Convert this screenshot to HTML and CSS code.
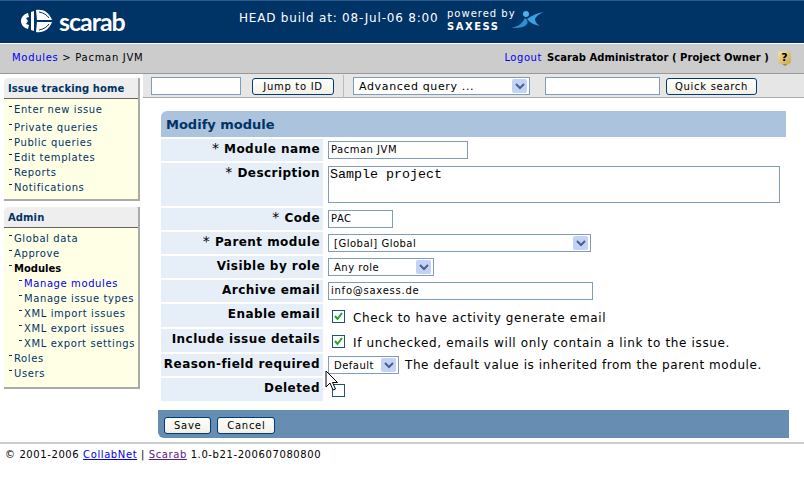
FILE: index.html
```html
<!DOCTYPE html>
<html lang="en">
<head>
    <meta charset="UTF-8">
    <title>Scarab - Modify module</title>
    <link rel="stylesheet" href="styles.css">
</head>
<body>
    <div class="header">
        <div class="logo">
            <svg class="beetle" width="32" height="24" viewBox="0 0 32 24">
                <g fill="#fff">
                    <path d="M7 4 C3 5 0 8 0 12 C0 16 3 19 7 20 L8 16 L5 15 L7 12 L5 9 L8 8 Z"/>
                    <path d="M10 3 L13 2 L13 22 L10 21 Z"/>
                    <path d="M15 1 C22 0 28 3 31 11 L16 11 Z"/>
                    <path d="M16 13 L31 13 C28 21 22 24 15 23 Z"/>
                </g>
                <path d="M18 3 C23 4 26 6 28 9 M18 21 C23 20 26 18 28 15" fill="none" stroke="#003366" stroke-width="1"/>
            </svg>
            <span class="logo-text">scarab</span>
        </div>
        <div class="build">HEAD build at: 08-Jul-06 8:00</div>
        <div class="powered">
            <div>powered by</div>
            <div class="saxess">SAXESS</div>
        </div>
        <svg class="saxess-logo" width="34" height="18" viewBox="0 0 34 18">
            <path d="M0 17 C6 16 11 13 14 7 C18 10 17 13 14 15 C10 17 5 17 0 17 Z" fill="#2f8fd0"/>
            <circle cx="15" cy="3" r="3" fill="#4fb0ea"/>
            <path d="M16 8 C20 5 26 2 33 1 C28 3 25 5 24 8 C24 11 26 13 29 15 C24 14 19 12 16 8 Z" fill="#3ba0e0"/>
        </svg>
    </div>

    <div class="crumbs">
        <div class="trail"><a href="#">Modules</a> &gt; Pacman JVM</div>
        <div class="user">
            <a href="#">Logout</a>
            <b>Scarab Administrator ( Project Owner )</b>
            <span class="help">?</span>
        </div>
    </div>

    <div class="page">
        <div class="sidebar">
            <div class="box">
                <div class="box-title">Issue tracking home</div>
                <ul class="menu">
                    <li class="first"><a href="#">Enter new issue</a></li>
                    <li><a href="#">Private queries</a></li>
                    <li><a href="#">Public queries</a></li>
                    <li><a href="#">Edit templates</a></li>
                    <li><a href="#">Reports</a></li>
                    <li><a href="#">Notifications</a></li>
                </ul>
            </div>
            <div class="box">
                <div class="box-title">Admin</div>
                <ul class="menu">
                    <li><a href="#">Global data</a></li>
                    <li><a href="#">Approve</a></li>
                    <li class="current">Modules</li>
                    <li class="sub active"><a href="#">Manage modules</a></li>
                    <li class="sub"><a href="#">Manage issue types</a></li>
                    <li class="sub"><a href="#">XML import issues</a></li>
                    <li class="sub"><a href="#">XML export issues</a></li>
                    <li class="sub"><a href="#">XML export settings</a></li>
                    <li><a href="#">Roles</a></li>
                    <li><a href="#">Users</a></li>
                </ul>
            </div>
        </div>

        <div class="content">
            <div class="toolbar">
                <div class="field w90"></div>
                <button class="btn jump">Jump to ID</button>
                <div class="divider"></div>
                <div class="select query">
                    <span>Advanced query ...</span>
                    <span class="arrow"><svg width="10" height="7" viewBox="0 0 10 7"><path d="M1 1 L5 5 L9 1" fill="none" stroke="#4a5f8a" stroke-width="2"/></svg></span>
                </div>
                <div class="field w115"></div>
                <button class="btn">Quick search</button>
            </div>

            <div class="panel">
                <div class="panel-title">Modify module</div>
                <div class="form">
                    <div class="label"><i>*</i> Module name</div>
                    <div class="value"><div class="field name">Pacman JVM</div></div>

                    <div class="label tall"><i>*</i> Description</div>
                    <div class="value"><div class="field area">Sample project</div></div>

                    <div class="label"><i>*</i> Code</div>
                    <div class="value"><div class="field code">PAC</div></div>

                    <div class="label"><i>*</i> Parent module</div>
                    <div class="value">
                        <div class="select parent">
                            <span>[Global] Global</span>
                            <span class="arrow"><svg width="10" height="7" viewBox="0 0 10 7"><path d="M1 1 L5 5 L9 1" fill="none" stroke="#4a5f8a" stroke-width="2"/></svg></span>
                        </div>
                    </div>

                    <div class="label">Visible by role</div>
                    <div class="value">
                        <div class="select role">
                            <span>Any role</span>
                            <span class="arrow"><svg width="10" height="7" viewBox="0 0 10 7"><path d="M1 1 L5 5 L9 1" fill="none" stroke="#4a5f8a" stroke-width="2"/></svg></span>
                        </div>
                    </div>

                    <div class="label">Archive email</div>
                    <div class="value"><div class="field email">info@saxess.de</div></div>

                    <div class="label tall-row">Enable email</div>
                    <div class="value check-row">
                        <span class="check"><svg width="11" height="11" viewBox="0 0 11 11"><path d="M2 5 L4.500 8 L9 2" fill="none" stroke="#22a622" stroke-width="2"/></svg></span>
                        <span class="hint">Check to have activity generate email</span>
                    </div>

                    <div class="label tall-row">Include issue details</div>
                    <div class="value check-row">
                        <span class="check"><svg width="11" height="11" viewBox="0 0 11 11"><path d="M2 5 L4.500 8 L9 2" fill="none" stroke="#22a622" stroke-width="2"/></svg></span>
                        <span class="hint">If unchecked, emails will only contain a link to the issue.</span>
                    </div>

                    <div class="label">Reason-field required</div>
                    <div class="value reason-row">
                        <div class="select reason">
                            <span>Default</span>
                            <span class="arrow"><svg width="10" height="7" viewBox="0 0 10 7"><path d="M1 1 L5 5 L9 1" fill="none" stroke="#4a5f8a" stroke-width="2"/></svg></span>
                        </div>
                        <span class="hint">The default value is inherited from the parent module.</span>
                    </div>

                    <div class="label tall-row">Deleted</div>
                    <div class="value check-row"><span class="check"></span></div>
                </div>
            </div>

            <div class="actions">
                <button class="btn">Save</button>
                <button class="btn">Cancel</button>
            </div>
        </div>
    </div>

    <div class="footer">
        &copy; 2001-2006 <a href="#">CollabNet</a> | <a href="#" class="visited">Scarab</a> 1.0-b21-200607080800
    </div>

    <svg class="cursor" width="14" height="22" viewBox="0 0 14 22">
        <path d="M1 1 L1 17 L5 13 L8 20 L10.500 19 L7.500 12.500 L12.500 12.500 Z" fill="#fff" stroke="#000" stroke-width="1"/>
    </svg>
</body>
</html>
```

FILE: styles.css
```css
html, body {
    margin: 0;
    padding: 0;
}
body {
    font-family: "DejaVu Sans", Verdana, sans-serif;
    font-size: 10px;
    letter-spacing: 0.25px;
    color: #000;
    background: #fff;
    position: relative;
    height: 500px;
    overflow: hidden;
}
a {
    color: #0000ee;
    text-decoration: none;
}

.header {
    height: 42px;
    background: #003366;
    border-top: 1px solid #2a5a8e;
    border-bottom: 1px solid #fff;
    display: flex;
    align-items: center;
    color: #fff;
}
.logo {
    width: 239px;
    padding-left: 21px;
    box-sizing: border-box;
    display: flex;
    align-items: center;
    gap: 6px;
    margin-bottom: 3px;
}
.logo-text {
    font-family: Lato, sans-serif;
    font-size: 25px;
    letter-spacing: -1px;
    font-weight: 700;
    line-height: 26px;
}
.build {
    font-size: 12px;
    letter-spacing: 0.8px;
    width: 208px;
    margin-bottom: 8px;
    white-space: nowrap;
}
.powered {
    font-size: 10px;
    letter-spacing: 1px;
    line-height: 13px;
    width: 64px;
    margin-bottom: 4px;
    white-space: nowrap;
}
.saxess {
    font-weight: bold;
    letter-spacing: 1.5px;
}
.saxess-logo {
    margin-bottom: 4px;
}

.crumbs {
    height: 30px;
    box-sizing: border-box;
    background: #cccccc;
    border-bottom: 1px solid #999;
    display: flex;
    justify-content: space-between;
    align-items: center;
    padding: 0 13px 2px 12px;
}
.trail {
    letter-spacing: 0.7px;
}
.user {
    display: flex;
    align-items: center;
    gap: 5px;
}
.user a {
    letter-spacing: 0.55px;
}
.user b {
    letter-spacing: 0.05px;
}
.help {
    width: 13px;
    height: 13px;
    margin: 0 0 1px 4px;
    background: linear-gradient(135deg, #f3e2a0, #c9a850);
    border-radius: 3px;
    font-weight: bold;
    font-size: 11px;
    line-height: 13px;
    text-align: center;
    letter-spacing: 0;
    position: relative;
}
.help::after {
    content: "";
    position: absolute;
    left: 4px;
    top: 13px;
    border-left: 3px solid transparent;
    border-right: 3px solid transparent;
    border-top: 2px solid #a88a3a;
}

.page {
    display: flex;
}
.sidebar {
    width: 136px;
    margin: 4px 3px 0 4px;
}
.box {
    margin-bottom: 6px;
    background: #ffffe6;
    border-right: 2px solid #aaa;
    border-bottom: 2px solid #aaa;
}
.box-title {
    height: 20px;
    line-height: 21px;
    padding-left: 4px;
    background: #eeeeee;
    border-bottom: 1px solid #666;
    color: #003366;
    font-weight: bold;
    letter-spacing: 0.1px;
    border-top-left-radius: 5px;
}
.menu {
    list-style: none;
    margin: 0;
    padding: 3px 0 4px 10px;
    letter-spacing: 0.6px;
}
.box + .box .menu {
    padding-top: 3px;
    padding-bottom: 6px;
}
.menu li {
    height: 15px;
    line-height: 15px;
    position: relative;
    color: #003366;
}
.menu li::before {
    content: "";
    position: absolute;
    left: -5px;
    top: 4px;
    width: 3px;
    height: 1px;
    background: #003366;
}
.menu a {
    color: #003366;
}
.menu .first {
    margin-bottom: 3px;
}
.menu .current {
    font-weight: bold;
    color: #000;
    letter-spacing: 0;
}
.menu .sub {
    margin-left: 10px;
}
.menu .active a {
    color: #0000ee;
}

.content {
    flex: 1;
}
.toolbar {
    height: 22px;
    padding: 1px 0 0 8px;
    background: #e6e6e6;
    border-bottom: 1px solid #aaa;
    display: flex;
    align-items: center;
}
.field {
    box-sizing: border-box;
    height: 18px;
    border: 1px solid #7f9db9;
    background: #fff;
    padding-left: 2px;
    line-height: 16px;
    letter-spacing: 0.5px;
    font-size: 10px;
}
.w90 {
    width: 90px;
    margin-right: 11px;
}
.w115 {
    width: 115px;
    margin: 0 6px 0 15px;
}
.btn {
    font-family: "DejaVu Sans", Verdana, sans-serif;
    font-size: 10px;
    letter-spacing: 0.7px;
    height: 17px;
    padding: 1px 9px 0;
    color: #000;
    background: linear-gradient(#ffffff, #f2f0e6);
    border: 1px solid #003c74;
    border-radius: 3px;
    line-height: 14px;
}
.toolbar .btn:last-child {
    padding: 1px 8px 0;
}
.jump {
    width: 82px;
    padding: 1px 0 0;
}
.divider {
    width: 1px;
    height: 23px;
    background: #bbb;
    margin: 0 9px 0 9px;
}
.select {
    box-sizing: border-box;
    height: 18px;
    border: 1px solid #7f9db9;
    background: #fff;
    display: flex;
    justify-content: space-between;
    align-items: center;
    padding: 0 2px 0 5px;
    letter-spacing: 0.5px;
}
.arrow {
    width: 15px;
    height: 14px;
    background: #c3d3f8;
    display: flex;
    align-items: center;
    justify-content: center;
    border-radius: 2px;
}
.query {
    width: 177px;
    font-size: 11px;
    letter-spacing: 0.65px;
}

.panel {
    margin: 13px 18px 0 18px;
}
.panel-title {
    height: 26px;
    line-height: 27px;
    padding-left: 5px;
    background: #abc3dc;
    color: #003366;
    font-weight: bold;
    font-size: 13px;
    letter-spacing: 0;
    border-top-left-radius: 6px;
}
.form {
    margin-top: 2px;
    display: grid;
    grid-template-columns: 162px 1fr;
    grid-auto-rows: auto;
    row-gap: 2px;
}
.label {
    background: #e6eff8;
    height: 22px;
    line-height: 21px;
    text-align: right;
    padding-right: 3px;
    font-size: 12px;
    font-weight: bold;
    letter-spacing: 0.45px;
}
.label i {
    font-style: normal;
    font-weight: normal;
    font-size: 14px;
    line-height: 14px;
}
.label.tall {
    height: 43px;
}
.label.tall-row {
    height: 23px;
}
.value {
    padding-left: 5px;
    display: flex;
    align-items: center;
    min-width: 0;
}
.name {
    width: 140px;
}
.area {
    width: 452px;
    height: 37px;
    align-self: flex-start;
    margin-top: 3px;
    font-family: "Liberation Mono", monospace;
    font-size: 13.33px;
    letter-spacing: 0;
    padding: 1px 0 0 1px;
    line-height: 14px;
}
.code {
    width: 65px;
}
.email {
    width: 265px;
    letter-spacing: 0.75px;
}
.parent {
    width: 263px;
}
.role {
    width: 106px;
}
.reason {
    width: 71px;
    margin-right: 6px;
}
.check-row {
    padding-left: 9px;
    padding-top: 2px;
}
.check {
    box-sizing: border-box;
    width: 13px;
    height: 13px;
    border: 1px solid #1c5180;
    background: #fff;
    margin-right: 8px;
    display: inline-flex;
    align-items: center;
    justify-content: center;
}
.hint {
    font-size: 12px;
    letter-spacing: 0.55px;
}
.check-row .hint {
    letter-spacing: 0.65px;
    margin-top: 2px;
}

.actions {
    margin: 9px 15px 0 15px;
    height: 26px;
    padding: 2px 0 0 6px;
    background: #678db2;
    border-bottom-left-radius: 6px;
    display: flex;
    align-items: center;
    gap: 6px;
}

.footer {
    position: absolute;
    left: 0;
    right: 0;
    top: 442px;
    border-top: 2px solid #cccccc;
    padding: 2px 5px;
    line-height: 17px;
    letter-spacing: 0.6px;
}
.footer a {
    text-decoration: underline;
}
.footer .visited {
    color: #551a8b;
}
.cursor {
    position: absolute;
    left: 325px;
    top: 370px;
}
```
